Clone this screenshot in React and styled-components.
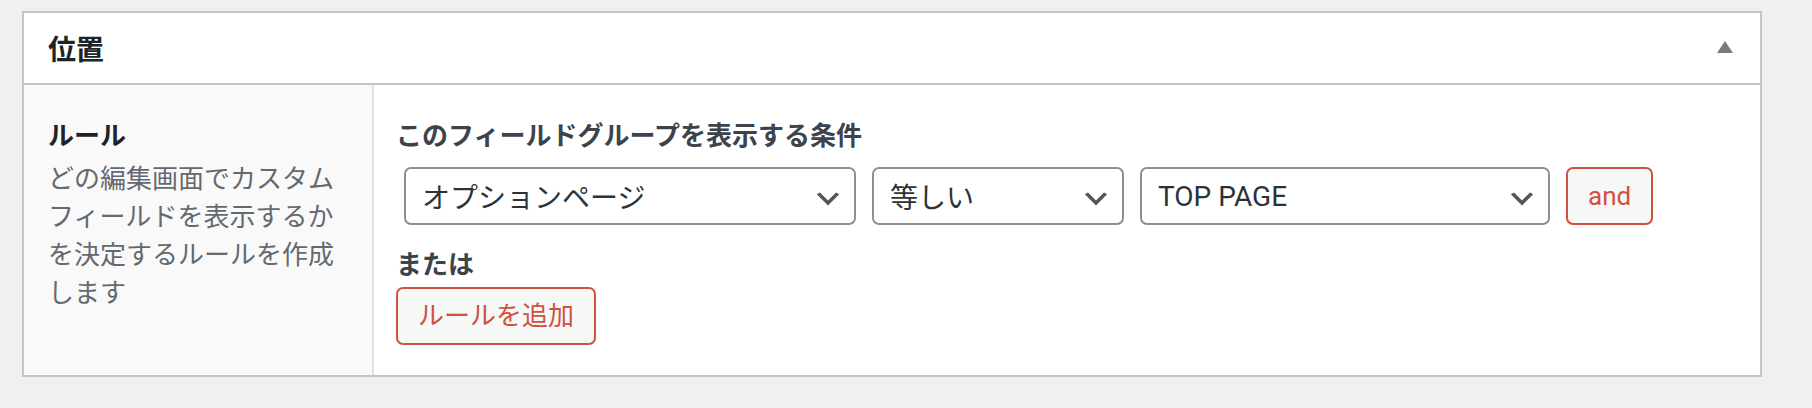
import React from "react";
import styled, {createGlobalStyle} from "styled-components";

const GlobalStyle = createGlobalStyle`
  html, body {
    margin: 0;
    padding: 0;
    background: #f0f0f1;
  }
  body {
    font-family: Roboto, "Noto Sans CJK JP", sans-serif;
    color: #3c434a;
  }
`

const Page = styled.div`
  height: 408px;
  padding: 11px 0 0 22px;
  box-sizing: border-box;
`

const Postbox = styled.div`
  width: 1740px;
  box-sizing: border-box;
  background: #ffffff;
  border: 2px solid #c3c4c7;
`

const Header = styled.div`
  height: 70px;
  box-sizing: border-box;
  display: flex;
  align-items: center;
  justify-content: space-between;
  padding: 0 27px 0 24px;
  border-bottom: 2px solid #c3c4c7;
  box-sizing: content-box;
`

const Title = styled.h2`
  margin: 0;
  padding-top: 5px;
  font-size: 28px;
  font-weight: 700;
  line-height: 40px;
  color: #1d2327;
`

const Toggle = styled.svg`
  width: 16px;
  height: 12px;
  margin-top: -2px;
  fill: #787c82;
`

const Body = styled.div`
  display: flex;
`

const LabelColumn = styled.div`
  width: 300px;
  flex: none;
  padding: 30px 24px;
  background: #f9f9f9;
  border-right: 2px solid #e1e1e1;
`

const FieldLabel = styled.div`
  font-size: 26px;
  font-weight: 700;
  padding-top: 6px;
  line-height: 30px;
  margin-bottom: ${props => props.gap || 0}px;
  color: ${props => props.dark ? "#1d2327" : "#3c434a"};
`

const Description = styled.p`
  margin: 0;
  font-size: 26px;
  line-height: 38px;
  color: #646970;
`

const InputColumn = styled.div`
  flex: 1;
  padding: 30px 24px 30px 22px;
`

const RuleRow = styled.div`
  display: grid;
  grid-template-columns: 452px 252px 410px 88px;
  column-gap: 16px;
  padding: 8px;
  margin-bottom: 11px;
`

const SelectBox = styled.div`
  height: 58px;
  box-sizing: border-box;
  display: flex;
  align-items: center;
  justify-content: space-between;
  padding: 0 10px 0 16px;
  border: 2px solid #8c8f94;
  border-radius: 7px;
  background: #ffffff;
  font-size: 28px;
  color: #2c3338;

  svg {
    width: 32px;
    height: 32px;
    flex: none;
    margin-top: 5px;
    fill: #555555;
  }
`

const Button = styled.button`
  height: 58px;
  box-sizing: border-box;
  padding: 0 20px;
  border: 2px solid #d1503f;
  border-radius: 7px;
  background: #f6f7f7;
  color: #d1503f;
  font-family: inherit;
  font-size: 26px;
  line-height: 54px;
  cursor: pointer;
  justify-self: start;
`

const Chevron = () => (
    <svg viewBox="0 0 20 20">
        <path d="M5 6l5 5 5-5 2 1-7 7-7-7 2-1z"/>
    </svg>
)

const Select = ({value}) => (
    <SelectBox>
        <span>{value}</span>
        <Chevron/>
    </SelectBox>
)

export default function App() {
    return (
        <Page>
            <GlobalStyle/>
            <Postbox>
                <Header>
                    <Title>位置</Title>
                    <Toggle viewBox="0 0 16 12">
                        <path d="M8 0L16 12H0z"/>
                    </Toggle>
                </Header>
                <Body>
                    <LabelColumn>
                        <FieldLabel dark gap={9}>ルール</FieldLabel>
                        <Description>
                            どの編集画面でカスタムフィールドを表示するかを決定するルールを作成します
                        </Description>
                    </LabelColumn>
                    <InputColumn>
                        <FieldLabel gap={8}>このフィールドグループを表示する条件</FieldLabel>
                        <RuleRow>
                            <Select value="オプションページ"/>
                            <Select value="等しい"/>
                            <Select value="TOP PAGE"/>
                            <Button>and</Button>
                        </RuleRow>
                        <FieldLabel gap={7}>または</FieldLabel>
                        <Button>ルールを追加</Button>
                    </InputColumn>
                </Body>
            </Postbox>
        </Page>
    )
}
